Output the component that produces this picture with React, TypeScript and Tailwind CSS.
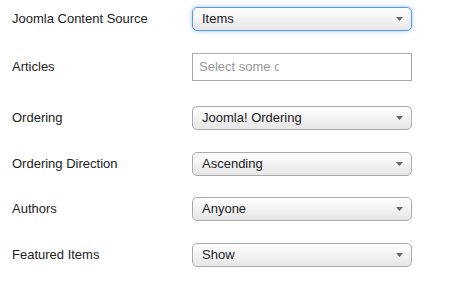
const Arrow = () => (
  <svg width="7" height="4" viewBox="0 0 7 4" className="absolute right-[8px] top-1/2 -translate-y-1/2">
    <path d="M0 0 L7 0 L3.5 4 Z" fill="#666" />
  </svg>
);

interface SelectProps {
  value: string;
  focused?: boolean;
}

const FakeSelect: React.FC<SelectProps> = ({ value, focused }) => (
  <div
    className={
      focused
        ? "relative w-[220px] h-[24px] rounded-[5px] border border-[#5897fb] bg-gradient-to-b from-white to-[#e6e6e6] shadow-[0_0_4px_rgba(82,168,236,0.6)] flex items-center pl-[9px] text-[13px] text-[#222]"
        : "relative w-[220px] h-[24px] rounded-[5px] border border-[#aaa] bg-gradient-to-b from-white to-[#e6e6e6] flex items-center pl-[9px] text-[13px] text-[#222]"
    }
  >
    {value}
    <Arrow />
  </div>
);

const Row: React.FC<{ label: string; className: string; children: React.ReactNode }> = ({
  label,
  className,
  children,
}) => (
  <div className={`flex items-center ${className}`}>
    <label className="w-[180px] text-[13px] text-[#222]">{label}</label>
    {children}
  </div>
);

export default function App() {
  return (
    <div
      className="w-[469px] h-[292px] bg-white pl-[12px] pt-[7px]"
      style={{ fontFamily: '"Liberation Sans", Arial, sans-serif' }}
    >
      <Row label="Joomla Content Source" className="">
        <FakeSelect value="Items" focused />
      </Row>
      {/* chosen-style multi select, placeholder clipped like the original */}
      <Row label="Articles" className="mt-[22px]">
        <div className="w-[220px] h-[28px] border border-[#aaa] bg-white flex items-center pl-[6px] text-[13px] text-[#999] overflow-hidden">
          <span className="w-[80px] overflow-hidden whitespace-nowrap">Select some options</span>
        </div>
      </Row>
      <Row label="Ordering" className="mt-[25px]">
        <FakeSelect value="Joomla! Ordering" />
      </Row>
      <Row label="Ordering Direction" className="mt-[22px]">
        <FakeSelect value="Ascending" />
      </Row>
      <Row label="Authors" className="mt-[21px]">
        <FakeSelect value="Anyone" />
      </Row>
      <Row label="Featured Items" className="mt-[22px]">
        <FakeSelect value="Show" />
      </Row>
    </div>
  );
}
